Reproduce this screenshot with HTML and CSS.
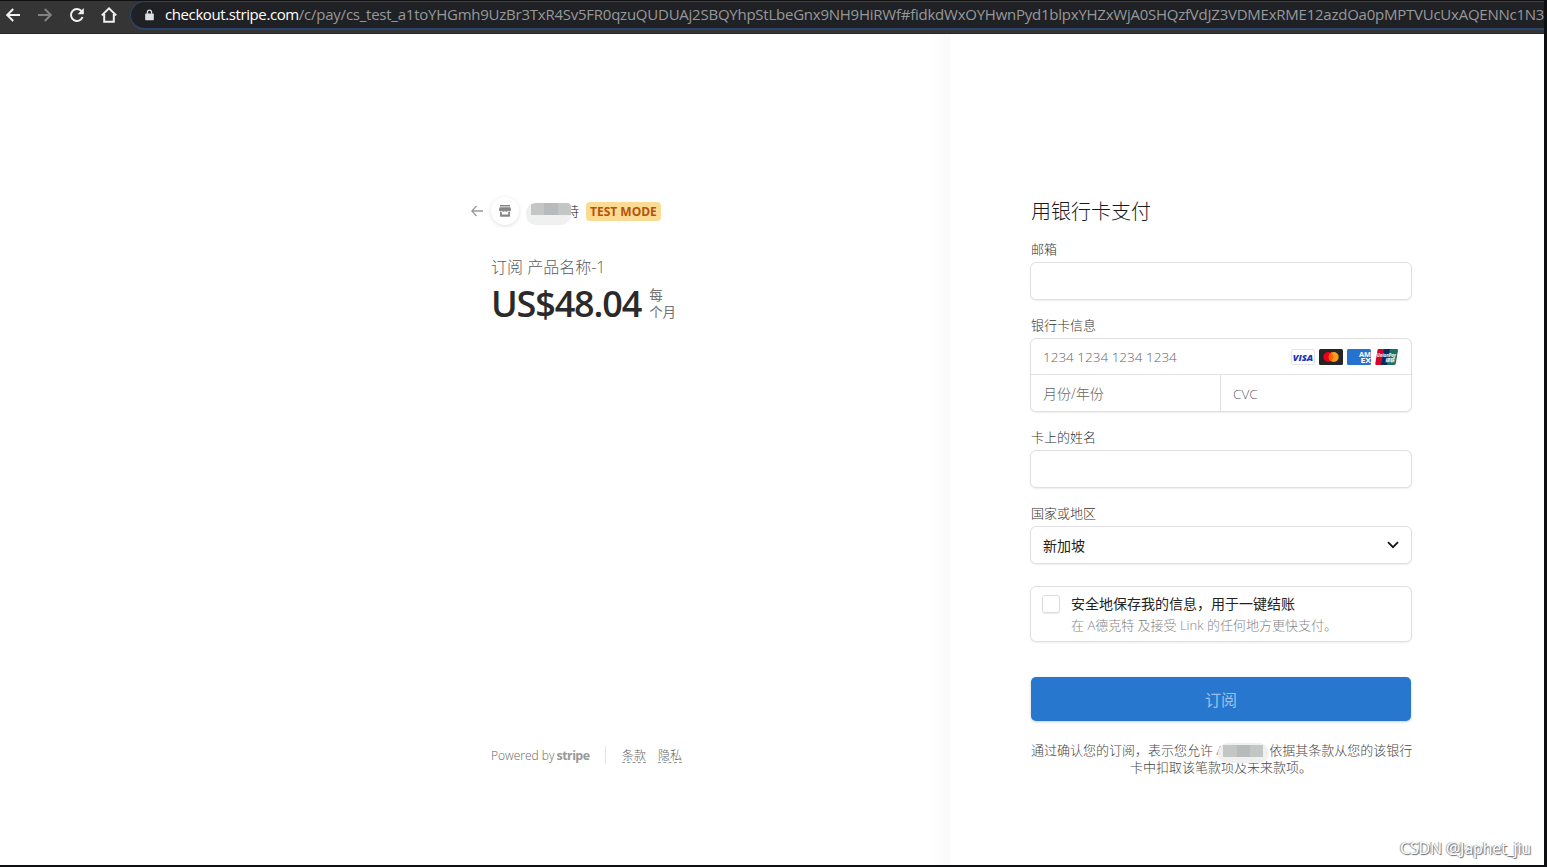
FILE: index.html
```html
<!DOCTYPE html>
<html lang="zh-CN">
<head>
    <meta charset="UTF-8">
    <meta name="viewport" content="width=device-width, initial-scale=1.0">
    <title>Checkout</title>
    <link rel="stylesheet" href="styles.css">
</head>
<body>
<div class="browser">
    <div class="toolbar">
        <svg class="nav-icon" viewBox="0 0 16 16"><path d="M15 8H2.5M8.2 2L2.2 8l6 6"/></svg>
        <svg class="nav-icon disabled" viewBox="0 0 16 16"><path d="M1 8h12.5M7.8 2l6 6-6 6"/></svg>
        <svg class="nav-icon" viewBox="0 0 16 16"><path d="M13.6 10A6 6 0 1 1 12.6 4.1"/><path class="solid" d="M14.8 1v6.2H8.6z"/></svg>
        <svg class="nav-icon" viewBox="0 0 16 16"><path d="M.8 8.4L8 1.4l7.2 7M3.2 7v7.8h9.6V7"/></svg>
        <div class="address">
            <svg class="lock" viewBox="0 0 10 12"><path d="M1 4.3h8q.8 0 .8.8v5.8q0 .8-.8.8H1q-.8 0-.8-.8V5.100q0-.8.8-.8z"/><path class="shackle" d="M2.700 4.500V3a2.300 2.300 0 0 1 4.600 0v1.500"/></svg>
            <div class="url"><span class="domain">checkout.stripe.com</span><span class="path">/c/pay/cs_test_a1toYHGmh9UzBr3TxR4Sv5FR0qzuQUDUAj2SBQYhpStLbeGnx9NH9HiRWf#fidkdWxOYHwnPyd1blpxYHZxWjA0SHQzfVdJZ3VDMExRME12azdOa0pMPTVUcUxAQENNc1N3</span></div>
        </div>
    </div>

    <div class="checkout">
        <section class="overview">
            <header class="merchant">
                <svg class="back" viewBox="0 0 12 12"><path d="M12 6H1M5.500 1L.8 6l4.700 5"/></svg>
                <span class="avatar"><svg viewBox="0 0 12 12"><path d="M1 0h10v1.600H1zM.6 2.300h10.800L12 4.600a1.500 1.500 0 0 1-3 .6 1.500 1.500 0 0 1-3 0 1.500 1.500 0 0 1-3 0 1.500 1.500 0 0 1-3-.6zM1 7h1.800v2.500h6.400V7H11v4q0 .8-.8.8H1.800Q1 11.800 1 11z"/></svg></span>
                <span class="merchant-name">
                    <span class="last-char">特</span>
                    <span class="mosaic"><i></i><i></i><i></i><i></i></span>
                </span>
                <span class="badge">TEST MODE</span>
            </header>
            <div class="product">订阅 产品名称-1</div>
            <div class="price">
                <span class="amount">US$48.04</span>
                <span class="interval">每<br>个月</span>
            </div>
            <footer class="footer">
                <span class="powered">Powered by <b>stripe</b></span>
                <span class="links"><a>条款</a><a>隐私</a></span>
            </footer>
        </section>

        <section class="payment">
            <h1>用银行卡支付</h1>
            <div class="field">
                <label>邮箱</label>
                <div class="control"></div>
            </div>
            <div class="field">
                <label>银行卡信息</label>
                <div class="card">
                    <div class="card-row number">
                        <span>1234 1234 1234 1234</span>
                        <span class="brands">
                            <svg viewBox="0 0 24 16"><rect x=".5" y=".5" width="23" height="15" rx="1.500" fill="#fff" stroke="#e3e3e6"/><text x="1.700" y="11.500" class="visa" textLength="20.500" lengthAdjust="spacingAndGlyphs">VISA</text></svg>
                            <svg viewBox="0 0 24 16"><rect width="24" height="16" rx="1.500" fill="#252525"/><circle cx="9.300" cy="8" r="5" fill="#eb001b"/><circle cx="14.700" cy="8" r="5" fill="#f79e1b"/><path d="M12 3.800a5 5 0 0 1 0 8.400 5 5 0 0 1 0-8.400z" fill="#ff5f00"/></svg>
                            <svg viewBox="0 0 24 16"><rect width="24" height="16" rx="1.500" fill="#2673cf"/><text x="12" y="7.800" class="amex" textLength="12" lengthAdjust="spacingAndGlyphs">AM</text><text x="13.500" y="13.600" class="amex" textLength="10.500" lengthAdjust="spacingAndGlyphs">EX</text></svg>
                            <svg viewBox="0 0 24 16"><path d="M3.500 0H10L7 16H1.500Q0 16 .3 14.500L2.500 1.200Q2.700 0 3.500 0z" fill="#d10429"/><path d="M9 0h7l-3 16H6z" fill="#022e64"/><path d="M15 0h7q1.200 0 1 1.200L20.800 14.600q-.2 1.400-1.500 1.400H12z" fill="#1c6f63"/><text x="2" y="8" class="union" textLength="19" lengthAdjust="spacingAndGlyphs">UnionPay</text><text x="10" y="13.300" class="union" textLength="9.500" lengthAdjust="spacingAndGlyphs">银联</text></svg>
                        </span>
                    </div>
                    <div class="card-row split">
                        <span class="expiry">月份/年份</span>
                        <span class="cvc">CVC</span>
                    </div>
                </div>
            </div>
            <div class="field">
                <label>卡上的姓名</label>
                <div class="control"></div>
            </div>
            <div class="field">
                <label>国家或地区</label>
                <div class="control select">
                    <span>新加坡</span>
                    <svg viewBox="0 0 12 8"><path d="M1 1.200l5 5 5-5"/></svg>
                </div>
            </div>
            <div class="save-info">
                <span class="checkbox"></span>
                <div>
                    <div class="save-title">安全地保存我的信息，用于一键结账</div>
                    <div class="save-note">在 A德克特 及接受 Link 的任何地方更快支付。</div>
                </div>
            </div>
            <button class="submit">订阅</button>
            <p class="terms">通过确认您的订阅，表示您允许 A<span class="mosaic small"><i></i><i></i><i></i><i></i></span>依据其条款从您的该银行<br>卡中扣取该笔款项及未来款项。</p>
        </section>
    </div>
    <div class="watermark">CSDN @Japhet_jiu</div>
</div>
</body>
</html>
```

FILE: styles.css
```css
* {
    box-sizing: border-box;
}

body {
    margin: 0;
    height: 867px;
    padding: 0 3px 2px 0;
    background: #0e0f11;
    font-family: "Open Sans", "Noto Sans CJK SC", sans-serif;
    font-weight: 300;
    overflow: hidden;
}

.browser {
    position: relative;
    height: 865px;
    display: flex;
    flex-direction: column;
    overflow: hidden;
}

/* Browser toolbar */
.toolbar {
    height: 34px;
    flex: none;
    display: flex;
    align-items: center;
    gap: 16px;
    padding: 0 0 4px 5px;
    background: #353536;
    border-top: 1px solid #111;
    border-bottom: 1px solid #252526;
}

.nav-icon {
    width: 16px;
    height: 16px;
    flex: none;
    fill: none;
    stroke: #f1f1f1;
    stroke-width: 2;
}

.nav-icon .solid {
    fill: #f1f1f1;
    stroke: none;
}

.nav-icon.disabled {
    stroke: #828283;
}

.address {
    flex: 1;
    min-width: 0;
    height: 29px;
    margin-left: -3px;
    padding-left: 14px;
    display: flex;
    align-items: center;
    gap: 11px;
    background: #202124;
    border: 1px solid #2b456d;
    border-bottom-width: 2px;
    border-right: 0;
    border-radius: 15px 0 0 15px;
    overflow: hidden;
}

.lock {
    width: 9px;
    height: 12px;
    flex: none;
    fill: #dedfe0;
}

.lock .shackle {
    fill: none;
    stroke: #dedfe0;
    stroke-width: 1.4;
}

.url {
    padding-bottom: 2px;
    font-size: 15px;
    font-weight: 400;
    line-height: 24px;
    white-space: nowrap;
    color: #96999c;
}

.domain {
    color: #fff;
    letter-spacing: -0.4px;
}

.path {
    letter-spacing: -0.24px;
}

/* Checkout page */
.checkout {
    flex: 1;
    display: flex;
    background: #fff;
}

.overview {
    width: 950px;
    padding: 163px 0 0 491px;
    display: flex;
    flex-direction: column;
    background: linear-gradient(to right, #fff 930px, #fafafa 950px);
}

.merchant {
    height: 28px;
    margin-left: -20px;
    display: flex;
    align-items: center;
}

.back {
    width: 12px;
    height: 12px;
    fill: none;
    stroke: #999;
    stroke-width: 1.3;
}

.avatar {
    width: 28px;
    height: 28px;
    margin-left: 8px;
    border-radius: 50%;
    display: flex;
    align-items: center;
    justify-content: center;
    box-shadow: 0 1px 4px rgba(0, 0, 0, 0.13);
}

.avatar svg {
    width: 12px;
    height: 12px;
    fill: #858585;
    overflow: visible;
}

.merchant-name {
    position: relative;
    width: 60px;
    height: 22px;
    margin: 5px 0 0 7px;
    padding-right: 7px;
    text-align: right;
}

/* The blurred part lies over the merchant name */
.mosaic {
    width: 45px;
    height: 22px;
    display: inline-flex;
    border-radius: 10px;
    overflow: hidden;
    background: #f0f0f0;
}

.merchant-name .mosaic {
    position: absolute;
    left: 0;
    top: 0;
    border-radius: 10px 4px 10px 10px;
}

.mosaic i {
    flex: 1;
    height: 12px;
    background: #c4c5c5;
}

.mosaic i:first-child {
    flex: 0 0 5px;
    background: #efefef;
}

.mosaic i:nth-child(3) {
    background: #b8babb;
}

.last-char {
    display: block;
    font-size: 13px;
    line-height: 16px;
    color: #111;
}

.badge {
    height: 19px;
    padding: 0 4px;
    border-radius: 4px;
    background: #fbda94;
    color: #b5530b;
    font-size: 12px;
    font-weight: 700;
    line-height: 19px;
    white-space: nowrap;
}

.product {
    height: 24px;
    margin-top: 30px;
    color: #5c5c5c;
    font-size: 16px;
    line-height: 24px;
}

.price {
    height: 48px;
    padding-top: 2px;
    display: flex;
    align-items: center;
    gap: 8px;
}

.amount {
    color: #2a2a2a;
    font-size: 36px;
    font-weight: 550;
    line-height: 48px;
    letter-spacing: -1.15px;
}

.interval {
    color: #737373;
    font-size: 13.5px;
    font-weight: 400;
    line-height: 17.5px;
}

.footer {
    height: 18px;
    margin: auto 0 101px;
    display: flex;
    align-items: center;
    color: #666;
    font-size: 12px;
    line-height: 18px;
}

.powered {
    width: 115px;
    border-right: 1px solid #e5e5e5;
    line-height: 20px;
    height: 18px;
    white-space: nowrap;
}

.powered b {
    margin-left: -1px;
    color: #999;
    font-weight: 700;
    font-size: 12.5px;
    letter-spacing: -0.6px;
}

.links {
    display: flex;
    gap: 12px;
    padding-left: 16px;
}

.links a {
    height: 16px;
    line-height: 18px;
    border-bottom: 1px dashed #999;
}

/* Payment form */
.payment {
    width: 462px;
    padding: 166px 0 0 80px;
}

.payment h1 {
    margin: 0 0 17px 1px;
    height: 24px;
    color: #1a1a1a;
    font-size: 20px;
    font-weight: 300;
    line-height: 24px;
}

.field {
    margin-bottom: 18px;
}

.field label {
    display: block;
    height: 16px;
    margin: 0 0 5px 1px;
    color: #333;
    font-size: 13px;
    line-height: 17px;
}

.control,
.card,
.save-info {
    border: 1px solid #e0e0e0;
    border-radius: 6px;
    background: #fff;
    box-shadow: 0 1px 2px rgba(0, 0, 0, 0.07);
}

.control {
    height: 38px;
    margin-bottom: -1px;
}

.card {
    height: 74px;
    margin-bottom: -1px;
    color: #666;
    font-size: 13.5px;
}

.card-row {
    height: 36px;
    padding: 0 12px;
    display: flex;
    align-items: center;
}

.number {
    justify-content: space-between;
    border-bottom: 1px solid #e3e3e3;
}

.number > span:first-child {
    padding-top: 1px;
}

.brands {
    display: flex;
    gap: 4px;
}

.brands svg {
    width: 24px;
    height: 16px;
}

.visa {
    font: italic 800 9.5px "Open Sans", sans-serif;
    fill: #1a34b8;
}

.amex {
    font: 700 7px "Open Sans", sans-serif;
    fill: #fff;
}

.union {
    font: italic 700 5px "Open Sans", "Noto Sans CJK SC", sans-serif;
    fill: #fff;
}

.split span {
    width: 177px;
    height: 36px;
    line-height: 38px;
}

.split .expiry {
    font-size: 14px;
}

.split .cvc {
    padding-left: 12px;
    border-left: 1px solid #e0e0e0;
}

.select {
    padding: 0 12px;
    display: flex;
    align-items: center;
    justify-content: space-between;
    color: #222;
    font-size: 14px;
    font-weight: 400;
}

.select svg {
    width: 12px;
    height: 8px;
    fill: none;
    stroke: #111;
    stroke-width: 1.7;
}

.save-info {
    height: 56px;
    margin-top: 23px;
    padding: 6px 11px;
    display: flex;
    gap: 11px;
}

.checkbox {
    width: 18px;
    height: 18px;
    margin-top: 2px;
    border: 1px solid #ddd;
    border-radius: 3px;
    box-shadow: 0 1px 1px rgba(0, 0, 0, 0.08);
}

.save-title {
    height: 21px;
    color: #222;
    font-size: 14px;
    font-weight: 400;
    line-height: 21px;
}

.save-note {
    color: #858585;
    font-size: 13px;
    line-height: 22px;
}

.submit {
    display: block;
    width: 380px;
    height: 44px;
    margin: 35px 0 0 1px;
    padding: 0;
    border: 0;
    border-radius: 5px;
    background: #2777cf;
    color: #9bc1e9;
    font-family: inherit;
    font-size: 16px;
    font-weight: 400;
    box-shadow: 0 1px 3px rgba(0, 0, 0, 0.2);
}

.terms {
    width: 380px;
    margin: 21px 0 0 1px;
    color: #444;
    font-size: 13px;
    line-height: 17px;
    text-align: center;
    white-space: nowrap;
}

.mosaic.small {
    position: relative;
    width: 51px;
    height: 20px;
    margin: 1px 0 -4px -6px;
    padding: 2px 6px 0 0;
    vertical-align: top;
}

.watermark {
    position: absolute;
    right: 13px;
    bottom: 7px;
    color: #fff;
    font-size: 16px;
    font-weight: 400;
    line-height: 20px;
    letter-spacing: -0.15px;
    text-shadow: 1px 1px 1px #666, -1px 0 1px #999;
}
```
